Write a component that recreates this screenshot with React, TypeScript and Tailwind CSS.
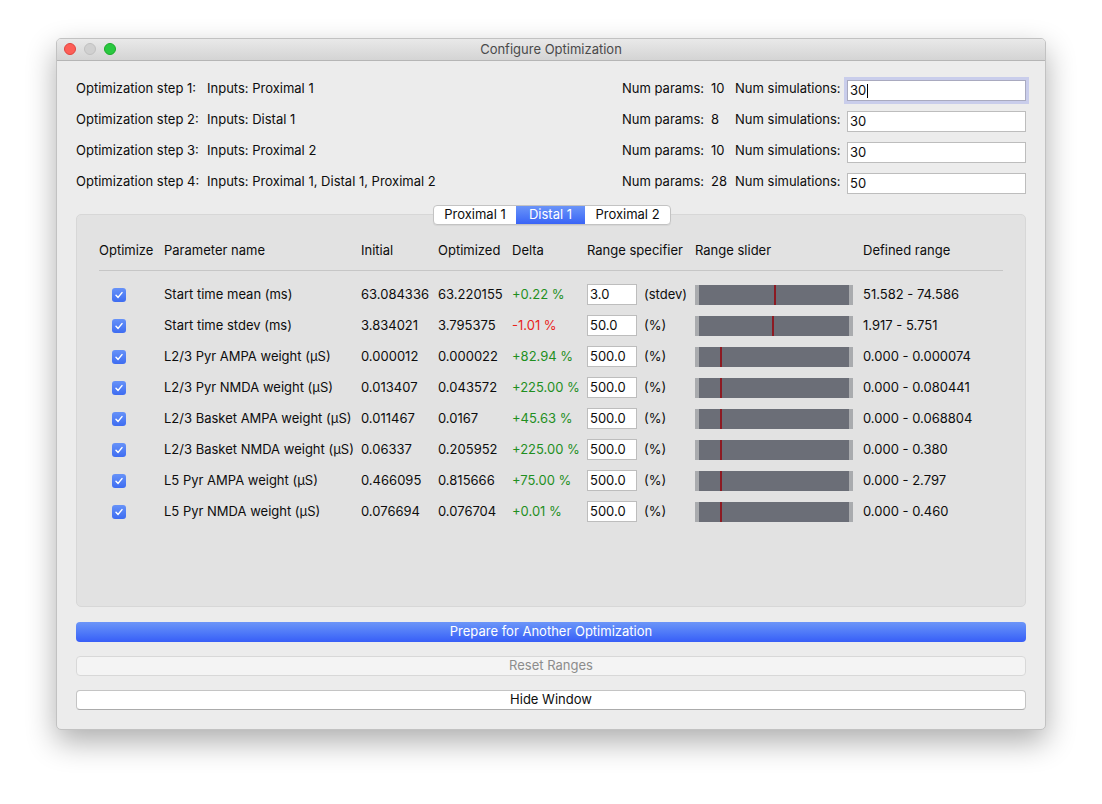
import React from 'react';

const font = { fontFamily: 'Inter, "Liberation Sans", Arial, sans-serif' };

type Row = {
  name: string;
  initial: string;
  optimized: string;
  delta: string;
  negative?: boolean;
  spec: string;
  unit: string;
  marker: number;
  range: string;
};

const steps = [
  { step: 'Optimization step 1:', inputs: 'Inputs: Proximal 1', params: '10', sims: '30', focused: true },
  { step: 'Optimization step 2:', inputs: 'Inputs: Distal 1', params: '8', sims: '30' },
  { step: 'Optimization step 3:', inputs: 'Inputs: Proximal 2', params: '10', sims: '30' },
  { step: 'Optimization step 4:', inputs: 'Inputs: Proximal 1, Distal 1, Proximal 2', params: '28', sims: '50' },
];

const rows: Row[] = [
  { name: 'Start time mean (ms)', initial: '63.084336', optimized: '63.220155', delta: '+0.22 %', spec: '3.0', unit: '(stdev)', marker: 75, range: '51.582 - 74.586' },
  { name: 'Start time stdev (ms)', initial: '3.834021', optimized: '3.795375', delta: '-1.01 %', negative: true, spec: '50.0', unit: '(%)', marker: 73, range: '1.917 - 5.751' },
  { name: 'L2/3 Pyr AMPA weight (µS)', initial: '0.000012', optimized: '0.000022', delta: '+82.94 %', spec: '500.0', unit: '(%)', marker: 21, range: '0.000 - 0.000074' },
  { name: 'L2/3 Pyr NMDA weight (µS)', initial: '0.013407', optimized: '0.043572', delta: '+225.00 %', spec: '500.0', unit: '(%)', marker: 21, range: '0.000 - 0.080441' },
  { name: 'L2/3 Basket AMPA weight (µS)', initial: '0.011467', optimized: '0.0167', delta: '+45.63 %', spec: '500.0', unit: '(%)', marker: 21, range: '0.000 - 0.068804' },
  { name: 'L2/3 Basket NMDA weight (µS)', initial: '0.06337', optimized: '0.205952', delta: '+225.00 %', spec: '500.0', unit: '(%)', marker: 21, range: '0.000 - 0.380' },
  { name: 'L5 Pyr AMPA weight (µS)', initial: '0.466095', optimized: '0.815666', delta: '+75.00 %', spec: '500.0', unit: '(%)', marker: 21, range: '0.000 - 2.797' },
  { name: 'L5 Pyr NMDA weight (µS)', initial: '0.076694', optimized: '0.076704', delta: '+0.01 %', spec: '500.0', unit: '(%)', marker: 21, range: '0.000 - 0.460' },
];

const Checkbox = () => (
  <div className="w-[14px] h-[14px] rounded-[3px] bg-gradient-to-b from-[#6792f8] to-[#3e6cf1] flex items-center justify-center">
    <svg width="10" height="10" viewBox="0 0 10 10">
      <path d="M2 5.2 L4.1 7.4 L8 2.6" fill="none" stroke="white" strokeWidth="1.5" strokeLinecap="round" strokeLinejoin="round" />
    </svg>
  </div>
);

const Slider = ({ marker }: { marker: number }) => (
  <div className="relative w-[158px] h-[20px] bg-[#6b6e77] border-x-[4px] border-[#a9abae]">
    <div className="absolute top-0 bottom-0 w-[2px] bg-[#8c1a22]" style={{ left: `${marker}px` }} />
  </div>
);

export default function App() {
  return (
    <div className="w-[1102px] h-[804px] bg-white pl-[56px] pt-[38px] text-[13px] text-[#0d0d0d]" style={font}>
      <div className="w-[990px] h-[692px] rounded-[5px] bg-[#ececec] border border-[#c2c2c2] shadow-[0_12px_30px_rgba(0,0,0,0.32)] flex flex-col overflow-hidden">
        {/* Title bar */}
        <div className="relative h-[22px] shrink-0 bg-gradient-to-b from-[#e9e9e9] to-[#d4d4d4] border-b border-[#b5b5b5] flex items-center justify-center">
          <div className="absolute left-[7px] top-[4px] flex gap-[8px]">
            <div className="w-[12px] h-[12px] rounded-full bg-[#fd5e57] border border-[#e0443e]" />
            <div className="w-[12px] h-[12px] rounded-full bg-[#d0d0d0] border border-[#c0c0c0]" />
            <div className="w-[12px] h-[12px] rounded-full bg-[#29c840] border border-[#1aab29]" />
          </div>
          <span className="text-[#4a4a4a]">Configure Optimization</span>
        </div>

        {/* Body */}
        <div className="flex-1 flex flex-col px-[19px] pt-[19px]">
          {/* Step rows */}
          <div className="flex flex-col gap-[10px]">
            {steps.map((s) => (
              <div key={s.step} className="flex items-center h-[21px]">
                <span className="w-[131px] mb-[4px]">{s.step}</span>
                <span className="flex-1 mb-[4px]">{s.inputs}</span>
                <span className="w-[89px] mb-[4px]">Num params:</span>
                <span className="w-[24px] mb-[4px]">{s.params}</span>
                <span className="w-[112px] mb-[4px]">Num simulations:</span>
                <div
                  className={`w-[179px] h-[21px] bg-white border flex items-center px-[2px] ${
                    s.focused ? 'border-[#a9aabf] ring-[3px] ring-[#c9cdeb]' : 'border-[#bdbdbd]'
                  }`}
                >
                  <span>{s.sims}</span>
                  {s.focused && <span className="w-px h-[14px] bg-black ml-px" />}
                </div>
              </div>
            ))}
          </div>

          {/* Tabs */}
          <div className="flex justify-center mt-[11px] -mb-[11px] relative z-10">
            <div className="flex h-[20px] rounded-[4px] border border-[#c3c3c3] bg-white overflow-hidden shadow-[0_1px_1px_rgba(0,0,0,0.06)] ml-[2px]">
              <div className="w-[82px] flex items-center justify-center">Proximal 1</div>
              <div className="w-[69px] flex items-center justify-center text-white bg-gradient-to-b from-[#6b94f8] to-[#3a63f6]">Distal 1</div>
              <div className="w-[85px] flex items-center justify-center">Proximal 2</div>
            </div>
          </div>

          {/* Group box */}
          <div className="h-[393px] rounded-[5px] bg-[#e2e2e2] border border-[#d7d7d7] px-[22px] pt-[26px]">
            <div className="grid grid-cols-[65px_197px_77px_74px_75px_108px_168px_1fr] h-[20px] items-center">
              <span>Optimize</span>
              <span>Parameter name</span>
              <span>Initial</span>
              <span>Optimized</span>
              <span>Delta</span>
              <span>Range specifier</span>
              <span>Range slider</span>
              <span>Defined range</span>
            </div>
            <div className="mt-[9px] border-t border-[#c6c6c6]" />
            <div className="flex flex-col gap-[10px] mt-[13px]">
              {rows.map((r) => (
                <div key={r.name} className="grid grid-cols-[65px_197px_77px_74px_75px_108px_168px_1fr] h-[21px] items-center">
                  <div className="flex pl-[13px]">
                    <Checkbox />
                  </div>
                  <span>{r.name}</span>
                  <span>{r.initial}</span>
                  <span>{r.optimized}</span>
                  <span className={r.negative ? 'text-[#e8231b]' : 'text-[#1f8f1f]'}>{r.delta}</span>
                  <div className="flex items-center gap-[7px]">
                    <div className="w-[50px] h-[21px] bg-white border border-[#bdbdbd] flex items-center px-[2px]">{r.spec}</div>
                    <span>{r.unit}</span>
                  </div>
                  <Slider marker={r.marker} />
                  <span>{r.range}</span>
                </div>
              ))}
            </div>
          </div>

          {/* Buttons */}
          <div className="flex flex-col gap-[14px] mt-[15px]">
            <div className="h-[20px] rounded-[4px] bg-gradient-to-b from-[#6c95f8] to-[#385df7] text-white flex items-center justify-center">
              Prepare for Another Optimization
            </div>
            <div className="h-[20px] rounded-[4px] bg-[#f4f4f4] border border-[#d8d8d8] text-[#8c8c8c] flex items-center justify-center">
              Reset Ranges
            </div>
            <div className="h-[20px] rounded-[4px] bg-white border border-[#c4c4c4] border-b-[#ababab] flex items-center justify-center">
              Hide Window
            </div>
          </div>
        </div>
      </div>
    </div>
  );
}
